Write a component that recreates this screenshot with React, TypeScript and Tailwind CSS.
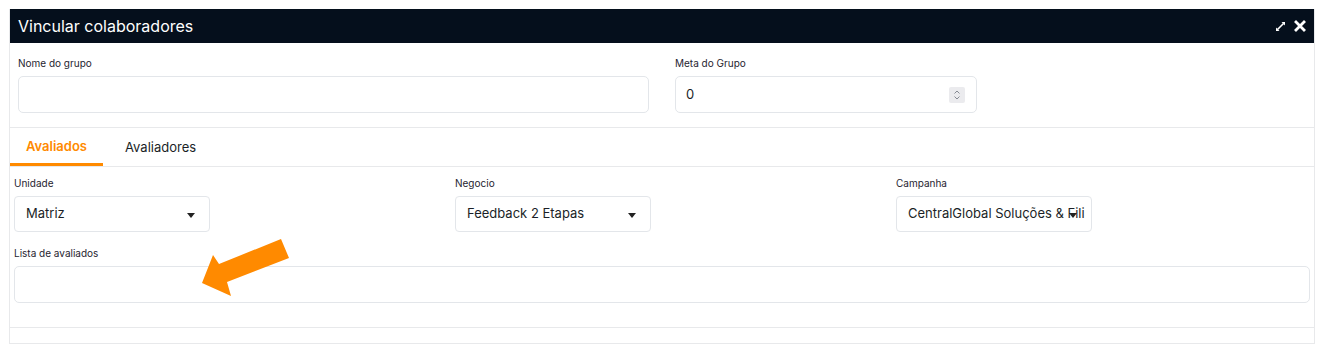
import React from "react";

function Label({ children }: { children: React.ReactNode }) {
  return <div className="text-[10px] leading-[14px] text-[#1f2430] mb-[6px]">{children}</div>;
}

function Select({ value }: { value: string }) {
  return (
    <div className="relative h-[36px] w-[196px] rounded-[4px] border border-[#e3e6ea] bg-white flex items-center pl-[11px] pr-[18px] overflow-hidden">
      <span className="text-[13px] text-[#1b1f27] whitespace-nowrap">{value}</span>
      <span className="absolute right-[14px] top-[16px] w-0 h-0 border-l-[4px] border-r-[4px] border-t-[5px] border-l-transparent border-r-transparent border-t-[#222]" />
    </div>
  );
}

export default function App() {
  return (
    <div className="relative w-[1325px] h-[355px] bg-white" style={{ fontFamily: "Inter, 'Open Sans', sans-serif" }}>
      <div className="pt-[9px] pl-[9px] pr-[10px]">
        <div className="border border-[#e8e9eb] border-t-0">
          {/* header */}
          <div className="h-[34px] bg-[#050f1c] flex items-center justify-between pl-[8px] pr-[8px]">
            <span className="text-[16px] text-white">Vincular colaboradores</span>
            <div className="flex items-center gap-[8px]">
              <svg width="11" height="11" viewBox="0 0 11 11">
                <path d="M6.5 1 H10 V4.5 Z" fill="white" />
                <path d="M1 6.5 V10 H4.5 Z" fill="white" />
                <path d="M8.5 2.5 L2.5 8.5" stroke="white" strokeWidth="1.6" />
              </svg>
              <svg width="12" height="12" viewBox="0 0 12 12">
                <path d="M2 2 L10 10 M10 2 L2 10" stroke="white" strokeWidth="2.8" strokeLinecap="square" />
              </svg>
            </div>
          </div>
          {/* top section */}
          <div className="flex pt-[13px] pb-[14px] pl-[8px] border-b border-[#e8e9eb]">
            <div className="w-[657px]">
              <Label>Nome do grupo</Label>
              <div className="h-[37px] w-[631px] rounded-[5px] border border-[#e3e6ea]" />
            </div>
            <div>
              <Label>Meta do Grupo</Label>
              <div className="h-[37px] w-[302px] rounded-[5px] border border-[#e3e6ea] flex items-center justify-between pl-[10px] pr-[11px]">
                <span className="text-[13px] text-[#1b1f27]">0</span>
                <div className="w-[16px] h-[16px] bg-[#ebebee] rounded-[2px] flex items-center justify-center">
                  <svg width="8" height="12" viewBox="0 0 8 12">
                    <path d="M1.5 4.5 L4 2 L6.5 4.5 M1.5 7.5 L4 10 L6.5 7.5" stroke="#7a7f88" strokeWidth="0.9" fill="none" />
                  </svg>
                </div>
              </div>
            </div>
          </div>
          {/* tabs */}
          <div className="flex h-[39px] border-b border-[#e8e9eb]">
            <div className="w-[93px] flex items-center justify-center border-b-[3px] border-[#ff8a00] pt-[2px]">
              <span className="text-[13px] font-semibold text-[#ff8a00]">Avaliados</span>
            </div>
            <div className="flex items-center pl-[22px] pt-[2px]">
              <span className="text-[13px] text-[#1b1f27]">Avaliadores</span>
            </div>
          </div>
          {/* form */}
          <div className="pl-[4px] pr-[4px] pt-[9px] pb-[24px] border-b border-[#e8e9eb]">
            <div className="grid grid-cols-[441px_441px_1fr]">
              <div>
                <Label>Unidade</Label>
                <Select value="Matriz" />
              </div>
              <div>
                <Label>Negocio</Label>
                <Select value="Feedback 2 Etapas" />
              </div>
              <div>
                <Label>Campanha</Label>
                <Select value="CentralGlobal Soluções & Fili" />
              </div>
            </div>
            <div className="mt-[14px]">
              <Label>Lista de avaliados</Label>
              <div className="h-[37px] rounded-[5px] border border-[#e3e6ea]" />
            </div>
          </div>
          <div className="h-[15px]" />
        </div>
      </div>
      <svg className="absolute left-0 top-0 pointer-events-none" width="1325" height="355">
        <polygon points="202,283 213,255 219,264 281,239 289,258 227,282 231,296" fill="#ff8a00" />
      </svg>
    </div>
  );
}
